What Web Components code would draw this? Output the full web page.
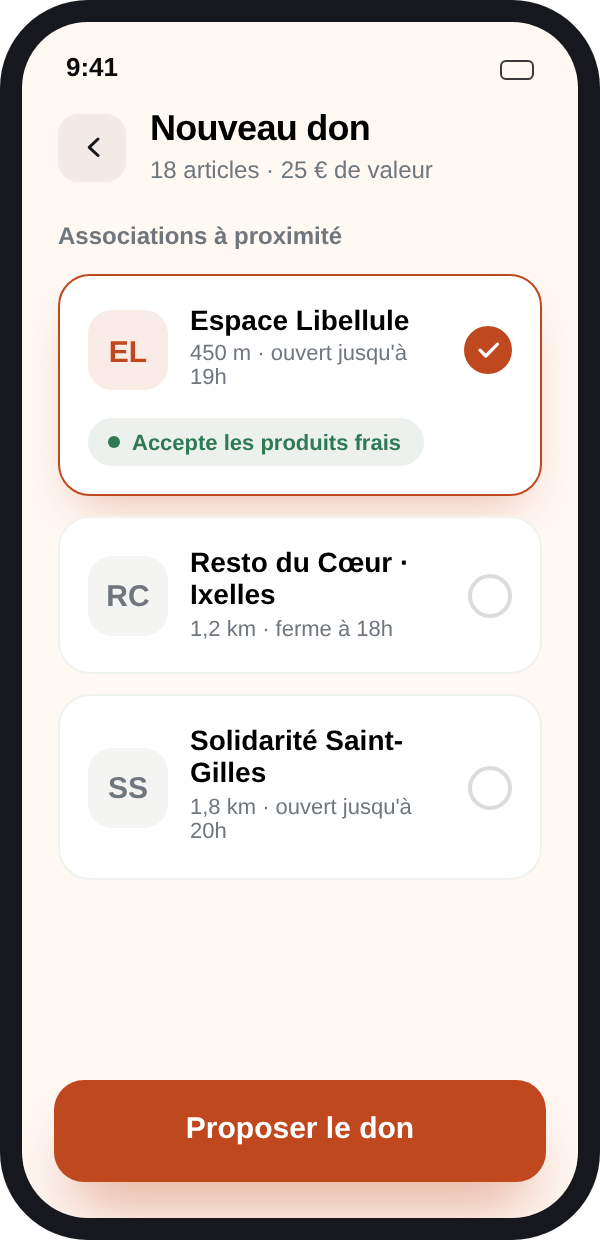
<!DOCTYPE html>
<html lang="fr">
<head>
<meta charset="utf-8">
<title>Nouveau don</title>
<style>
    html, body { margin: 0; padding: 0; background: #fff; }
    body { font-family: "Liberation Sans", Arial, sans-serif; text-rendering: geometricPrecision; }
</style>
</head>
<body>
<phone-frame>
    <status-bar slot="status" time="9:41"></status-bar>
    <don-header slot="header" title="Nouveau don" sub="18 articles · 25 € de valeur"></don-header>
    <section-label slot="label">Associations à proximité</section-label>
    <asso-card slot="cards" initials="EL" name="Espace Libellule" meta="450 m · ouvert jusqu'à 19h" selected>
        <fresh-tag>Accepte les produits frais</fresh-tag>
    </asso-card>
    <asso-card slot="cards" initials="RC" name="Resto du Cœur · Ixelles" meta="1,2 km · ferme à 18h" style="--row: 98px"></asso-card>
    <asso-card slot="cards" initials="SS" name="Solidarité Saint-Gilles" meta="1,8 km · ouvert jusqu'à 20h" style="--row: 126px"></asso-card>
    <cta-button slot="cta">Proposer le don</cta-button>
</phone-frame>
<script>
class PhoneFrame extends HTMLElement {
    constructor() {
        super();
        this.attachShadow({mode: "open"}).innerHTML = `
            <style>
                :host {
                    display: block;
                    width: 600px;
                    height: 1240px;
                    box-sizing: border-box;
                    padding: 22px;
                    background: #17181d;
                    border-radius: 88px;
                }
                .screen {
                    height: 100%;
                    box-sizing: border-box;
                    border-radius: 66px;
                    background: #fff8f3;
                    overflow: hidden;
                    display: flex;
                    flex-direction: column;
                    padding: 0 36px;
                    will-change: transform;
                }
                .cards {
                    display: flex;
                    flex-direction: column;
                    gap: 20px;
                }
                .cta {
                    margin: auto -4px 36px;
                }
            </style>
            <div class="screen">
                <slot name="status"></slot>
                <slot name="header"></slot>
                <slot name="label"></slot>
                <div class="cards"><slot name="cards"></slot></div>
                <div class="cta"><slot name="cta"></slot></div>
            </div>
        `;
    }
}
customElements.define("phone-frame", PhoneFrame);

class StatusBar extends HTMLElement {
    constructor() {
        super();
        this.attachShadow({mode: "open"}).innerHTML = `
            <style>
                :host {
                    display: flex;
                    justify-content: space-between;
                    align-items: center;
                    height: 30px;
                    margin: 30px 8px 0 8px;
                }
                .time {
                    font: bold 26px/30px "Liberation Sans", Arial, sans-serif;
                    color: #0a0a0a;
                }
                .battery {
                    width: 34px;
                    height: 20px;
                    box-sizing: border-box;
                    margin-top: 5px;
                    border: 2px solid #3a3a3c;
                    border-radius: 6px;
                }
            </style>
            <span class="time"></span>
            <span class="battery"></span>
        `;
        this.shadowRoot.querySelector(".time").textContent = this.getAttribute("time");
    }
}
customElements.define("status-bar", StatusBar);

class DonHeader extends HTMLElement {
    constructor() {
        super();
        this.attachShadow({mode: "open"}).innerHTML = `
            <style>
                :host {
                    display: flex;
                    align-items: center;
                    gap: 24px;
                    margin-top: 24px;
                }
                .back {
                    flex: none;
                    width: 68px;
                    height: 68px;
                    border-radius: 20px;
                    background: #f1eae7;
                    display: flex;
                    align-items: center;
                    justify-content: center;
                }
                .text {
                    padding-bottom: 3px;
                }
                .title {
                    font: bold 36px/44px "Liberation Sans", Arial, sans-serif;
                    letter-spacing: -0.72px;
                    color: #000;
                }
                .sub {
                    margin-top: 5px;
                    font: 24px/32px "Liberation Sans", Arial, sans-serif;
                    color: #6f767e;
                }
            </style>
            <div class="back">
                <svg width="24" height="24" viewBox="0 0 24 24" fill="none" stroke="#17181d" stroke-width="3" stroke-linecap="round" stroke-linejoin="round"><path d="M18 3 L9.2 11.3 L18 19.5"/></svg>
            </div>
            <div class="text">
                <div class="title"></div>
                <div class="sub"></div>
            </div>
        `;
        this.shadowRoot.querySelector(".title").textContent = this.getAttribute("title");
        this.shadowRoot.querySelector(".sub").textContent = this.getAttribute("sub");
    }
}
customElements.define("don-header", DonHeader);

class SectionLabel extends HTMLElement {
    constructor() {
        super();
        this.attachShadow({mode: "open"}).innerHTML = `
            <style>
                :host {
                    display: block;
                    margin: 31px 0 21px;
                    font: bold 24px/32px "Liberation Sans", Arial, sans-serif;
                    color: #6f767e;
                }
            </style>
            <slot></slot>
        `;
    }
}
customElements.define("section-label", SectionLabel);

class AssoCard extends HTMLElement {
    constructor() {
        super();
        this.attachShadow({mode: "open"}).innerHTML = `
            <style>
                :host {
                    display: block;
                    box-sizing: border-box;
                    padding: 28px;
                    background: #fff;
                    border: 2px solid #f0f2ee;
                    border-radius: 32px;
                }
                :host([selected]) {
                    border-color: #c0481e;
                    box-shadow: 0 24px 48px -20px rgba(192, 72, 30, 0.36);
                }
                .row {
                    display: flex;
                    align-items: center;
                    gap: 22px;
                    height: var(--row, 92px);
                    padding-top: 2px;
                    box-sizing: border-box;
                }
                :host([selected]) .row {
                    padding-top: 0;
                }
                .avatar {
                    flex: none;
                    width: 80px;
                    height: 80px;
                    box-sizing: border-box;
                    padding-top: 2px;
                    border-radius: 24px;
                    background: #f4f4f2;
                    color: #6f767e;
                    display: flex;
                    align-items: center;
                    justify-content: center;
                    font: bold 30px/36px "Liberation Sans", Arial, sans-serif;
                }
                :host([selected]) .avatar {
                    padding-top: 5px;
                    background: #f9ece6;
                    color: #c0481e;
                }
                .info {
                    flex: 1;
                    min-width: 0;
                    align-self: flex-start;
                    margin-top: -1px;
                }
                :host([selected]) .info {
                    margin-top: 1px;
                }
                .name {
                    font: bold 28px/32.2px "Liberation Sans", Arial, sans-serif;
                    color: #000;
                }
                .meta {
                    margin-top: 5.6px;
                    font: 22px/24px "Liberation Sans", Arial, sans-serif;
                    color: #6f767e;
                }
                :host([selected]) .meta {
                    margin-top: 3.8px;
                }
                .radio {
                    flex: none;
                    width: 44px;
                    height: 44px;
                    box-sizing: border-box;
                    border: 4px solid #dcdcda;
                    border-radius: 50%;
                }
                .check {
                    flex: none;
                    width: 48px;
                    height: 48px;
                    border-radius: 50%;
                    background: #c0481e;
                    display: flex;
                    align-items: center;
                    justify-content: center;
                }
                ::slotted(*) {
                    margin-top: 22px;
                }
            </style>
            <div class="row">
                <div class="avatar"></div>
                <div class="info">
                    <div class="name"></div>
                    <div class="meta"></div>
                </div>
            </div>
            <slot></slot>
        `;
        const root = this.shadowRoot;
        root.querySelector(".avatar").textContent = this.getAttribute("initials");
        root.querySelector(".name").textContent = this.getAttribute("name");
        root.querySelector(".meta").textContent = this.getAttribute("meta");
        const mark = document.createElement("div");
        if (this.hasAttribute("selected")) {
            mark.className = "check";
            mark.innerHTML = `<svg width="24" height="24" viewBox="0 0 24 24" fill="none" stroke="#fff" stroke-width="3.2" stroke-linecap="round" stroke-linejoin="round"><path d="M4 12.2 L9.8 18 L21.5 6.2"/></svg>`;
        } else {
            mark.className = "radio";
        }
        root.querySelector(".row").appendChild(mark);
    }
}
customElements.define("asso-card", AssoCard);

class FreshTag extends HTMLElement {
    constructor() {
        super();
        this.attachShadow({mode: "open"}).innerHTML = `
            <style>
                :host {
                    display: flex;
                    width: fit-content;
                    align-items: center;
                    gap: 12px;
                    height: 48px;
                    box-sizing: border-box;
                    padding: 2px 23px 0 20px;
                    border-radius: 24px;
                    background: #ecf1ee;
                    color: #2f7a55;
                    font: bold 22px/28px "Liberation Sans", Arial, sans-serif;
                }
                .dot {
                    width: 12px;
                    height: 12px;
                    margin-top: -2px;
                    border-radius: 50%;
                    background: #2f7a55;
                }
            </style>
            <span class="dot"></span>
            <slot></slot>
        `;
    }
}
customElements.define("fresh-tag", FreshTag);

class CtaButton extends HTMLElement {
    constructor() {
        super();
        this.attachShadow({mode: "open"}).innerHTML = `
            <style>
                :host {
                    display: flex;
                    align-items: center;
                    justify-content: center;
                    height: 102px;
                    box-sizing: border-box;
                    padding-bottom: 4px;
                    border-radius: 30px;
                    background: #c0481e;
                    color: #fff;
                    font: bold 30px/36px "Liberation Sans", Arial, sans-serif;
                    box-shadow: 0 40px 60px -20px rgba(192, 72, 30, 0.45);
                }
            </style>
            <slot></slot>
        `;
    }
}
customElements.define("cta-button", CtaButton);
</script>
</body>
</html>
